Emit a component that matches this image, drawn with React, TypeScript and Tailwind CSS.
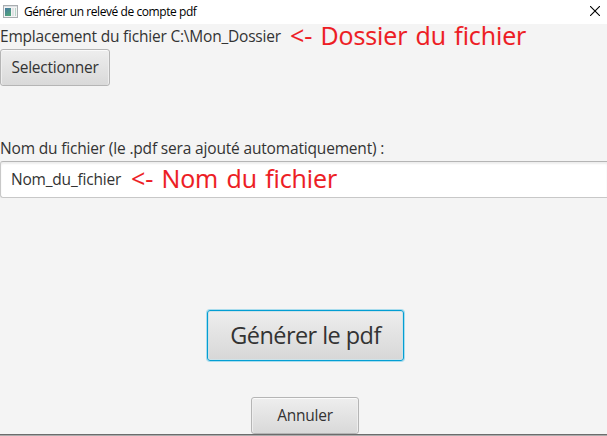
import React from "react";

const button =
  "flex shrink-0 items-center justify-center whitespace-nowrap rounded-[3px] border border-[#b5b5b5] bg-linear-to-b from-[#eeeeee] to-[#d9d9d9] text-[#333333] shadow-[inset_0_1px_0_#fafafa,inset_1px_0_0_#eeeeee,inset_-1px_0_0_#eeeeee]";

const note =
  "pb-0.5 text-[25px] leading-[25px] tracking-[-0.1px] [word-spacing:1.9px] text-[#ed1c24] [-webkit-text-stroke:0.12px_#ed1c24]";

function WindowIcon() {
  return (
    <svg width="15" height="14" viewBox="0 0 15 14" shapeRendering="crispEdges">
      <defs>
        <linearGradient id="pane" x1="0" y1="0" x2="0.5" y2="1">
          <stop offset="0" stopColor="#4778a0" />
          <stop offset="1" stopColor="#4fa27c" />
        </linearGradient>
      </defs>
      <rect x="0.5" y="0.5" width="14" height="12" fill="#f4f4f4" stroke="#a9adb0" />
      <rect x="1" y="1" width="13" height="1" fill="#dce0e3" />
      <rect x="2" y="3" width="6" height="8" fill="url(#pane)" />
      <rect x="9" y="3" width="2" height="8" fill="#dfe2e4" />
      <rect x="12" y="3" width="1" height="8" fill="#b8d7ca" />
    </svg>
  );
}

function TitleBar() {
  return (
    <header className="flex h-6 shrink-0 items-center bg-white pr-[7px] pl-[3px] text-black">
      <WindowIcon />
      <h1 className="ml-1.5 flex-1 whitespace-nowrap text-[12px] leading-[22px] tracking-[-0.43px]">
        Générer un relevé de compte pdf
      </h1>
      <button aria-label="Fermer" className="mb-0.5">
        <svg width="10" height="10" viewBox="0 0 10 10" stroke="currentColor" strokeWidth="1.1">
          <path d="M0 0L10 10M10 0L0 10" />
        </svg>
      </button>
    </header>
  );
}

export default function App() {
  return (
    <div className="flex h-[436px] w-[607px] flex-col overflow-hidden bg-[#f4f4f4] font-['Open_Sans',sans-serif] text-[#333333]">
      <TitleBar />
      <main className="flex min-h-0 flex-1 flex-col">
        <div className="flex h-[25px] shrink-0 items-center whitespace-nowrap">
          <p className="w-[290px] shrink-0 text-[15.5px] tracking-[-0.21px]">
            Emplacement du fichier C:\Mon_Dossier
          </p>
          <p className={note}>&lt;- Dossier du fichier</p>
        </div>
        <button className={`${button} h-[37px] w-[110px] text-[15.5px] tracking-[-0.25px]`}>
          Selectionner
        </button>
        <label className="mt-[50px] flex h-[25px] shrink-0 items-center whitespace-nowrap text-[15.5px] tracking-[-0.17px]">
          Nom du fichier (le .pdf sera ajouté automatiquement) :
        </label>
        <div className="flex h-[37px] shrink-0 items-center whitespace-nowrap rounded-l-[3px] border border-r-0 border-[#c8c8c8] border-t-[#b5b5b5] bg-white pl-2.5 shadow-[inset_0_2px_2px_#eeeeee]">
          <span className="w-[120px] shrink-0 text-[15.5px] tracking-[-0.2px]">Nom_du_fichier</span>
          <span className={note}>&lt;- Nom du fichier</span>
        </div>
        <button className="mt-[112px] ml-[207px] flex h-[51px] w-[197px] shrink-0 items-center justify-center whitespace-nowrap rounded-[3px] border border-[#039ed3] bg-linear-to-b from-[#eeeeee] to-[#d7d7d7] text-[23.5px] tracking-[-0.55px] text-[#333333] shadow-[0_0_0_1px_#a9dced,inset_0_0_0_1px_#cfe2e8]">
          Générer le pdf
        </button>
        <button className={`${button} mt-[36px] ml-[251px] h-[37px] w-[108px] text-[15.5px] tracking-[-0.25px]`}>
          Annuler
        </button>
      </main>
      <footer className="h-0.5 shrink-0 border-t border-[#6c6c6c] bg-[#acacac]" />
    </div>
  );
}
